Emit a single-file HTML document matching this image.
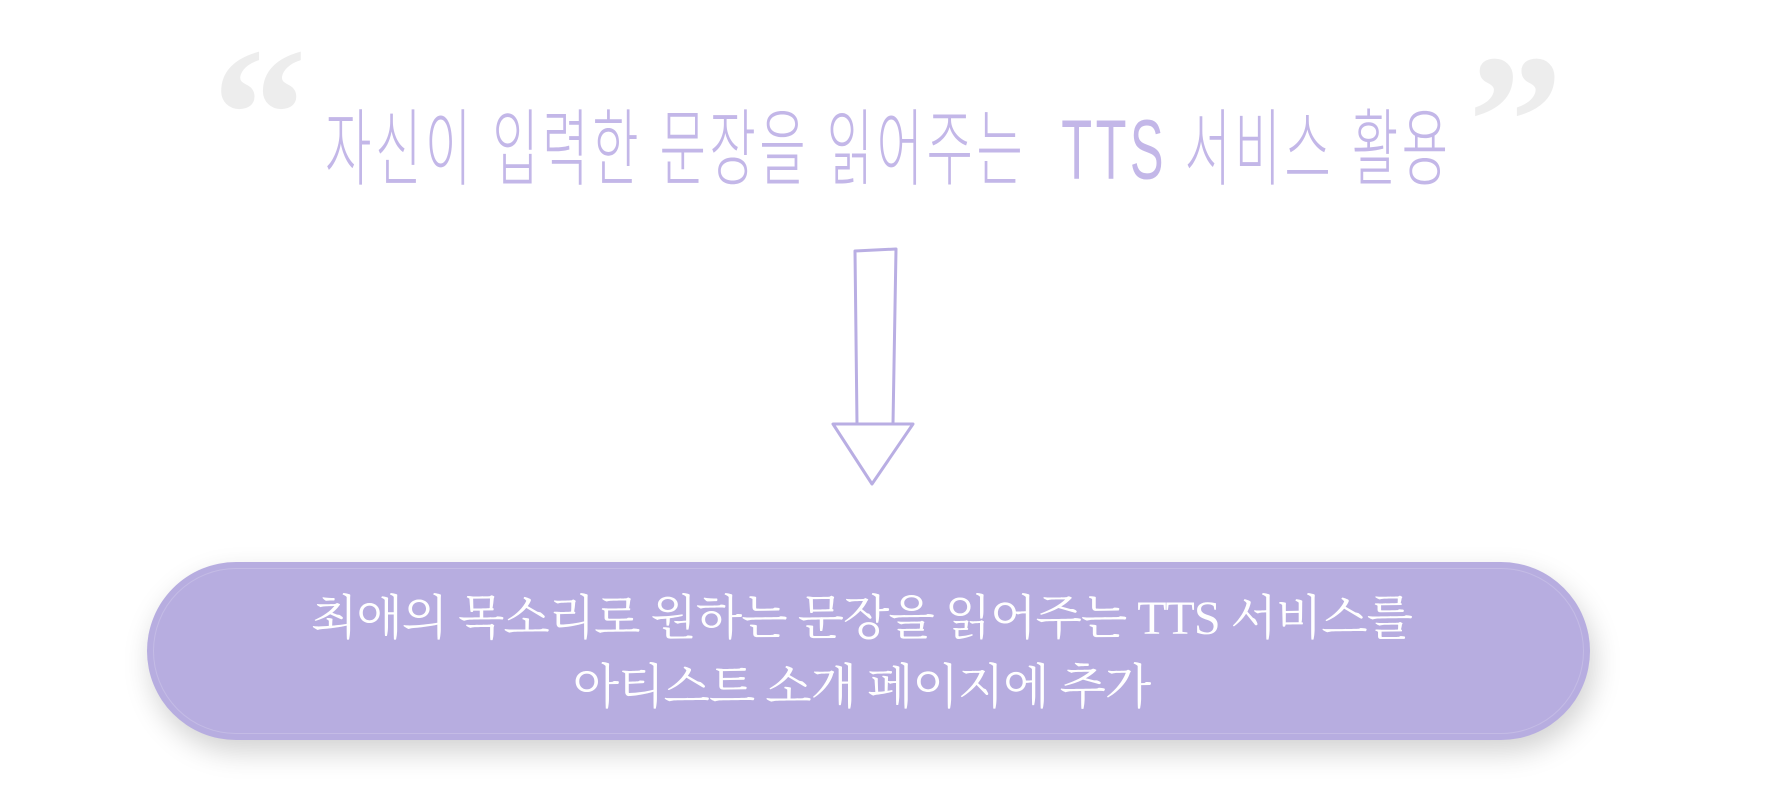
<!DOCTYPE html>
<html><head><meta charset="utf-8"><style>
html,body{margin:0;padding:0;width:1772px;height:788px;background:#fff;overflow:hidden;position:relative}
.q{position:absolute;font-family:"Liberation Serif",serif;font-weight:bold;color:#ededed;font-size:190px;line-height:1}
.title{position:absolute;left:249px;width:1170px;top:100px;text-align:center;font-family:"Liberation Sans","Noto Sans CJK KR",sans-serif;font-weight:300;font-size:58px;color:#c3b7e8;letter-spacing:4px;white-space:nowrap;transform:scale(0.87,1.45);transform-origin:50% 50%}
.pill{position:absolute;left:147px;top:562px;width:1443px;height:178px;border-radius:89px;background:#b7ade0;box-shadow:4px 12px 28px rgba(0,0,0,0.18)}
.pill .in{position:absolute;left:6px;top:6px;right:6px;bottom:6px;border-radius:83px;border:1px solid rgba(255,255,255,0.18)}
.txt{position:absolute;left:140px;width:1443px;top:584px;text-align:center;font-family:"Liberation Serif","Noto Serif CJK SC",serif;color:#fff;font-size:48px;line-height:69px;letter-spacing:-1px}
</style></head><body>
<div class="q" style="left:212px;top:20px">&ldquo;</div>
<div class="q" style="left:1468px;top:27px">&rdquo;</div>
<div class="title">자신이 입력한 문장을 읽어주는 &nbsp;TTS 서비스 활용</div>
<svg style="position:absolute;left:0;top:0" width="1772" height="788">
<g fill="none" stroke="#b9aee3" stroke-width="3" stroke-linejoin="round">
<path d="M855 251 L896 249 L893 424 L857 424 Z"/>
<path d="M833 424 L913 424 L872 484 Z"/>
</g>
</svg>
<div class="pill"><div class="in"></div></div>
<div class="txt">최애의 목소리로 원하는 문장을 읽어주는 TTS 서비스를<br>아티스트 소개 페이지에 추가</div>
</body></html>
